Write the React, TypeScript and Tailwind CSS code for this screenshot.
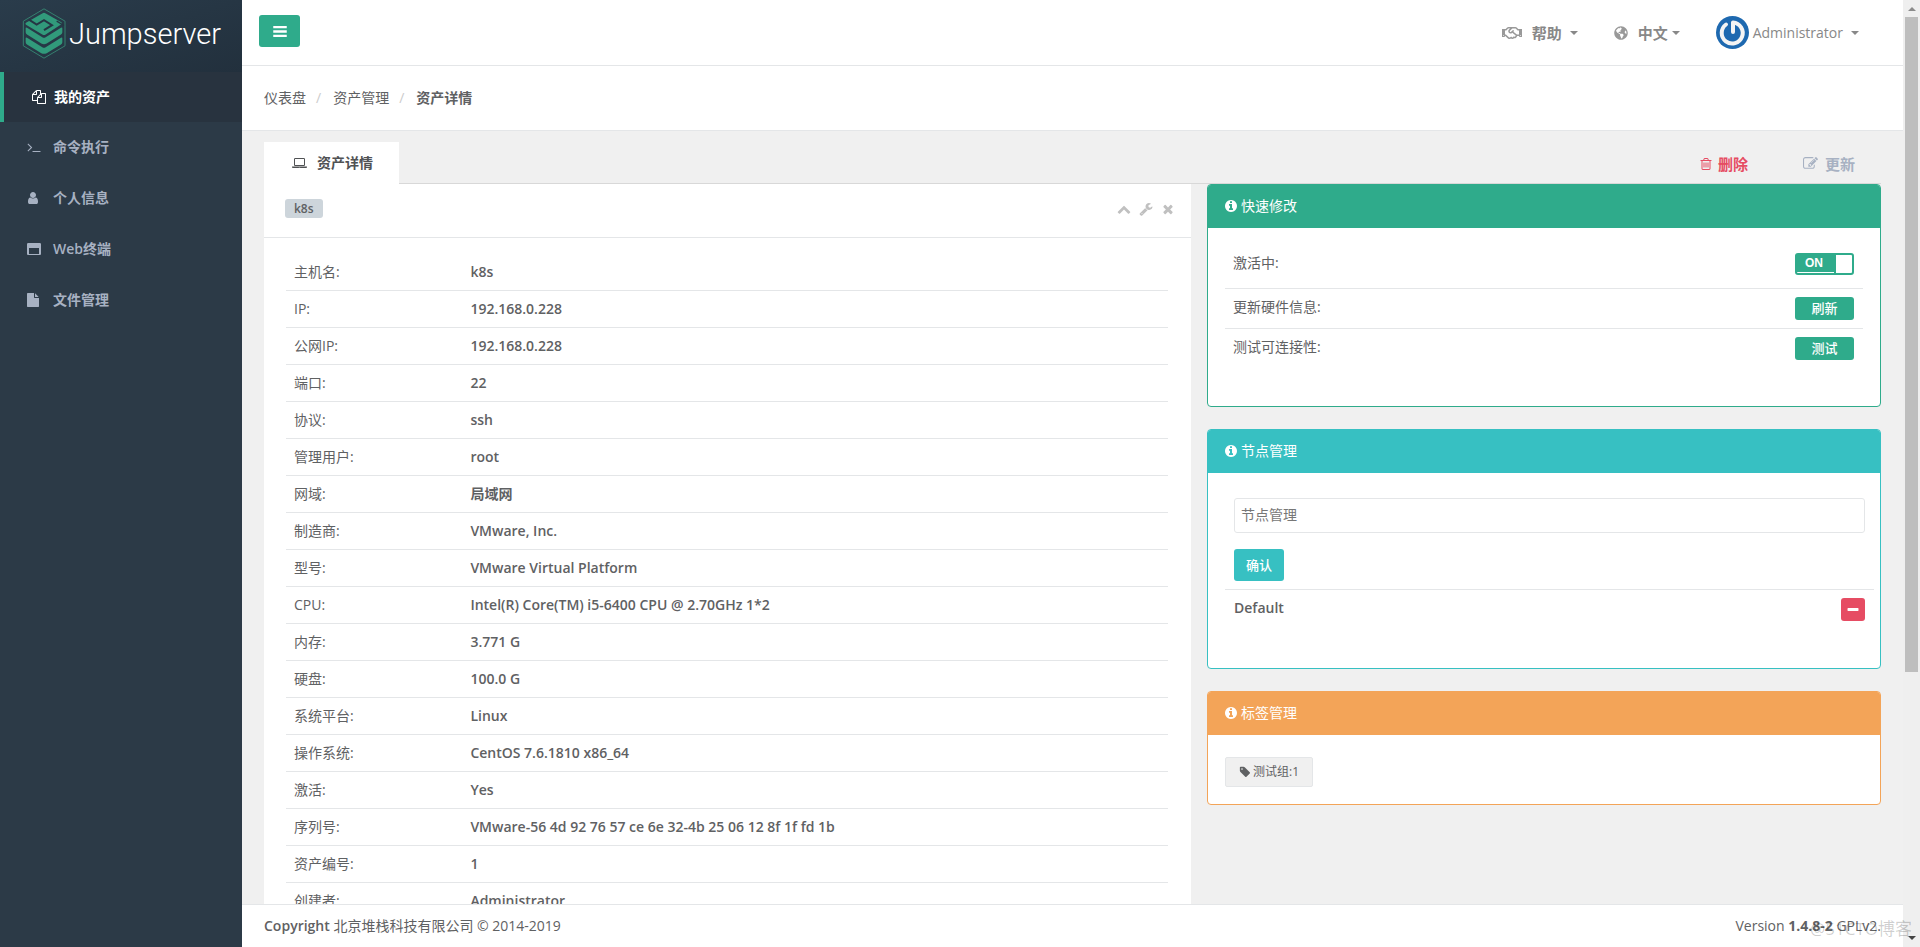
import { useState } from 'react';
import type { ReactNode } from 'react';
import { FaGlobeAmericas, FaRegHandshake } from 'react-icons/fa';

// Font Awesome 4 outlines, drawn on a 1792 grid
const paths = {
  files: 'M1696 384q40 0 68 28t28 68v1216q0 40-28 68t-68 28h-960q-40 0-68-28t-28-68v-288h-544q-40 0-68-28t-28-68v-672q0-40 20-88t48-76l408-408q28-28 76-48t88-20h416q40 0 68 28t28 68v328q68-40 128-40h416zm-544 213l-299 299h299v-299zm-640-384l-299 299h299v-299zm196 647l316-316v-416h-384v416q0 40-28 68t-68 28h-416v640h512v-256q0-40 20-88t48-76zm956 804v-1152h-384v416q0 40-28 68t-68 28h-416v640h896z',
  terminal: 'M649 983l-466 466q-10 10-23 10t-23-10l-50-50q-10-10-10-23t10-23l393-393-393-393q-10-10-10-23t10-23l50-50q10-10 23-10t23 10l466 466q10 10 10 23t-10 23zm1079 457v64q0 14-9 23t-23 9h-960q-14 0-23-9t-9-23v-64q0-14 9-23t23-9h960q14 0 23 9t9 23z',
  user: 'M1408 1399q0 109-62.5 187t-150.5 78h-854q-88 0-150.5-78t-62.5-187q0-85 8.5-160.5t31.5-152 58.5-131 94-89 134.5-34.5q131 128 313 128t313-128q76 0 134.5 34.5t94 89 58.5 131 31.5 152 8.5 160.5zm-256-887q0 159-112.5 271.5t-271.5 112.5-271.5-112.5-112.5-271.5 112.5-271.5 271.5-112.5 271.5 112.5 112.5 271.5z',
  window: 'M256 1536h1280v-768h-1280v768zm1536-1248v1216q0 66-47 113t-113 47h-1472q-66 0-113-47t-47-113v-1216q0-66 47-113t113-47h1472q66 0 113 47t47 113z',
  file: 'M1024 512v-472q22 14 36 28l408 408q14 14 28 36h-472zm-128 32q0 40 28 68t68 28h544v1056q0 40-28 68t-68 28h-1344q-40 0-68-28t-28-68v-1600q0-40 28-68t68-28h800v544z',
  laptop: 'M416 1280q-66 0-113-47t-47-113v-704q0-66 47-113t113-47h1088q66 0 113 47t47 113v704q0 66-47 113t-113 47h-1088zm-32-864v704q0 13 9.5 22.5t22.5 9.5h1088q13 0 22.5-9.5t9.5-22.5v-704q0-13-9.5-22.5t-22.5-9.5h-1088q-13 0-22.5 9.5t-9.5 22.5zm1376 928h160v96q0 40-47 68t-113 28h-1600q-66 0-113-28t-47-68v-96h1760zm-720 96q16 0 16-16t-16-16h-160q-16 0-16 16t16 16h160z',
  trash: 'M704 736v576q0 14-9 23t-23 9h-64q-14 0-23-9t-9-23v-576q0-14 9-23t23-9h64q14 0 23 9t9 23zm256 0v576q0 14-9 23t-23 9h-64q-14 0-23-9t-9-23v-576q0-14 9-23t23-9h64q14 0 23 9t9 23zm256 0v576q0 14-9 23t-23 9h-64q-14 0-23-9t-9-23v-576q0-14 9-23t23-9h64q14 0 23 9t9 23zm128 724v-948h-896v948q0 22 7 40.5t14.5 27 10.5 8.5h832q3 0 10.5-8.5t14.5-27 7-40.5zm-672-1076h448l-48-117q-7-9-17-11h-317q-10 2-17 11zm928 32v64q0 14-9 23t-23 9h-96v948q0 83-47 143.5t-113 60.5h-832q-66 0-113-58.5t-47-141.5v-952h-96q-14 0-23-9t-9-23v-64q0-14 9-23t23-9h309l70-167q15-37 54-63t79-26h320q40 0 79 26t54 63l70 167h309q14 0 23 9t9 23z',
  edit: 'M888 1184l116-116-152-152-116 116v56h96v96h56zm440-720q-16-16-33 1l-350 350q-17 17-1 33t33-1l350-350q17-17 1-33zm80 594v190q0 119-84.5 203.5t-203.5 84.5h-832q-119 0-203.5-84.5t-84.5-203.5v-832q0-119 84.5-203.5t203.5-84.5h832q63 0 117 25 15 7 18 23 3 17-9 29l-49 49q-14 14-32 8-23-6-45-6h-832q-66 0-113 47t-47 113v832q0 66 47 113t113 47h832q66 0 113-47t47-113v-126q0-13 9-22l64-64q15-15 35-7t20 29zm-96-738l288 288-672 672h-288v-288zm444 132l-92 92-288-288 92-92q28-28 68-28t68 28l152 152q28 28 28 68t-28 68z',
  info: 'M1152 1376v-160q0-14-9-23t-23-9h-96v-512q0-14-9-23t-23-9h-320q-14 0-23 9t-9 23v160q0 14 9 23t23 9h96v320h-96q-14 0-23 9t-9 23v160q0 14 9 23t23 9h448q14 0 23-9t9-23zm-128-896v-160q0-14-9-23t-23-9h-192q-14 0-23 9t-9 23v160q0 14 9 23t23 9h192q14 0 23-9t9-23zm640 416q0 209-103 385.5t-279.5 279.5-385.5 103-385.5-103-279.5-279.5-103-385.5 103-385.5 279.5-279.5 385.5-103 385.5 103 279.5 279.5 103 385.5z',
  chevronUp: 'M1683 1331l-166 165q-19 19-45 19t-45-19l-531-531-531 531q-19 19-45 19t-45-19l-166-165q-19-19-19-45.5t19-45.5l742-741q19-19 45-19t45 19l742 741q19 19 19 45.5t-19 45.5z',
  wrench: 'M448 1472q0-26-19-45t-45-19-45 19-19 45 19 45 45 19 45-19 19-45zm644-420l-682 682q-37 37-90 37-52 0-91-37l-106-108q-38-36-38-90 0-53 38-91l681-681q39 98 114.5 173.5t173.5 114.5zm634-435q0 39-23 106-47 134-164.5 217.5t-258.5 83.5q-185 0-316.5-131.5t-131.5-316.5 131.5-316.5 316.5-131.5q58 0 121.5 16.5t107.5 46.5q16 11 16 28t-16 28l-293 169v224l193 107q5-3 79-48.5t135.5-81 70.5-35.5q15 0 23.5 10t8.5 25z',
  times: 'M1490 1322q0 40-28 68l-136 136q-28 28-68 28t-68-28l-294-294-294 294q-28 28-68 28t-68-28l-136-136q-28-28-28-68t28-68l294-294-294-294q-28-28-28-68t28-68l136-136q28-28 68-28t68 28l294 294 294-294q28-28 68-28t68 28l136 136q28 28 28 68t-28 68l-294 294 294 294q28 28 28 68z',
  minus: 'M1600 736v192q0 40-28 68t-68 28h-1216q-40 0-68-28t-28-68v-192q0-40 28-68t68-28h1216q40 0 68 28t28 68z',
  tag: 'M576 448q0-53-37.5-90.5t-90.5-37.5-90.5 37.5-37.5 90.5 37.5 90.5 90.5 37.5 90.5-37.5 37.5-90.5zm1067 576q0 53-37 90l-491 492q-39 37-91 37-53 0-90-37l-715-716q-38-37-64.5-101t-26.5-117v-416q0-52 38-90t90-38h416q53 0 117 26.5t102 64.5l715 714q37 39 37 91z',
  bars: 'M32 256h1728v300h-1728zM32 810h1728v300h-1728zM32 1364h1728v300h-1728z',
};

type IconName = keyof typeof paths;

function Icon({ name, className = 'size-3.5' }: { name: IconName; className?: string }) {
  return (
    <svg viewBox={name === 'laptop' ? '0 0 1920 1792' : '0 0 1792 1792'} fill="currentColor" className={`shrink-0 ${className}`} aria-hidden="true">
      <path d={paths[name]} />
    </svg>
  );
}

const menu: { icon: IconName; label: string }[] = [
  { icon: 'files', label: '我的资产' },
  { icon: 'terminal', label: '命令执行' },
  { icon: 'user', label: '个人信息' },
  { icon: 'window', label: 'Web终端' },
  { icon: 'file', label: '文件管理' },
];

const details = [
  ['主机名:', 'k8s'],
  ['IP:', '192.168.0.228'],
  ['公网IP:', '192.168.0.228'],
  ['端口:', '22'],
  ['协议:', 'ssh'],
  ['管理用户:', 'root'],
  ['网域:', '局域网'],
  ['制造商:', 'VMware, Inc.'],
  ['型号:', 'VMware Virtual Platform'],
  ['CPU:', 'Intel(R) Core(TM) i5-6400 CPU @ 2.70GHz 1*2'],
  ['内存:', '3.771 G'],
  ['硬盘:', '100.0 G'],
  ['系统平台:', 'Linux'],
  ['操作系统:', 'CentOS 7.6.1810 x86_64'],
  ['激活:', 'Yes'],
  ['序列号:', 'VMware-56 4d 92 76 57 ce 6e 32-4b 25 06 12 8f 1f fd 1b'],
  ['资产编号:', '1'],
  ['创建者:', 'Administrator'],
];

function Caret({ className = '' }: { className?: string }) {
  return <span className={`size-0 border-x-4 border-t-4 border-x-transparent border-t-current ${className}`} />;
}

function Logo() {
  return (
    <svg viewBox="0 0 132 152" className="h-[51px] w-11 shrink-0" fill="none" aria-hidden="true">
      <path d="M66 2 129 39v74L66 150 4 113V39z" stroke="#35806f" strokeWidth="3" />
      <g fill="#319a7b">
        <path d="M62 15q4-2 8 0l48 27q4 3 0 6L71 79q-5 3-10 0L12 50q-4-3 0-6z" />
        <path d="M11 60q0-3 4-1l46 28q5 3 10 0l46-28q4-2 4 1v12q0 4-4 7l-43 27q-8 4-16 0L15 79q-4-3-4-7z" />
        <path d="M11 90q0-3 4-1l46 28q5 3 10 0l46-28q4-2 4 1v12q0 4-4 7l-43 26q-8 4-16 0l-43-26q-4-3-4-7z" />
      </g>
      <path d="M22 35 44 49 66 36 90 51 66 66" stroke="#253543" strokeWidth="6" />
      <path d="M126 52 104 39" stroke="#253543" strokeWidth="4" />
    </svg>
  );
}

function Avatar() {
  return (
    <svg viewBox="0 0 33 33" className="size-[33px]" fill="none" aria-hidden="true">
      <circle cx="16.5" cy="16.5" r="16.5" fill="#1e69b0" />
      <path d="M10 8.5A10.500 10.500 0 1 0 17 6.500V16" stroke="#f4f4f4" strokeWidth="4" strokeLinecap="round" strokeLinejoin="round" />
    </svg>
  );
}

function Sidebar() {
  return (
    <aside className="w-[242px] shrink-0 bg-[#2c3a47]">
      <div className="flex h-[72px] items-start bg-linear-to-br from-[#2a3c4b] to-[#22303d] pt-2 pl-[22px]">
        <Logo />
        <span className="ml-[3px] font-[Roboto] text-[29px] leading-[52px] font-light text-white">Jumpserver</span>
      </div>
      <nav className="flex flex-col gap-px">
        {menu.map((item, i) => (
          <a
            key={item.label}
            href="#"
            className={`flex h-[50px] items-center font-semibold ${
              i === 0 ? 'border-l-4 border-[#2fab8b] bg-[#28333f] pl-7 text-white' : 'pb-0.5 pl-[27px] text-[#a7b1c2]'
            }`}
          >
            <Icon name={item.icon} className={i === 0 ? 'mr-2 size-3.5' : 'mr-3 size-3.5'} />
            {item.label}
          </a>
        ))}
      </nav>
    </aside>
  );
}

function TopBar() {
  return (
    <header className="flex h-[66px] shrink-0 items-center border-b border-[#e4e6e8] bg-white pr-11 pl-[17px] text-[#888]">
      <button type="button" aria-label="菜单" className="-mt-1 flex h-8 w-[41px] items-center justify-center rounded-[3px] bg-[#2fab8b] text-white">
        <Icon name="bars" />
      </button>
      <div className="ml-auto flex items-center text-[15px]">
        <a href="#" className="flex items-center font-semibold">
          <FaRegHandshake className="mr-2.5 h-4 w-5 text-[#999]" />
          帮助
          <Caret className="ml-2" />
        </a>
        <a href="#" className="ml-9 flex items-center font-semibold">
          <FaGlobeAmericas className="mr-2.5 size-3.5 text-[#999]" />
          中文
          <Caret className="ml-1" />
        </a>
        <a href="#" className="ml-9 flex items-center text-sm">
          <Avatar />
          <span className="mr-2 ml-1">Administrator</span>
          <Caret />
        </a>
      </div>
    </header>
  );
}

function Breadcrumb() {
  return (
    <nav aria-label="breadcrumb" className="h-[65px] shrink-0 border-b border-[#e4e6e8] bg-white pt-[22px] pl-[22px]">
      <ol className="flex">
        <li><a href="#">仪表盘</a></li>
        <li className="pr-3 pl-2.5 text-[#ccc]">/</li>
        <li><a href="#">资产管理</a></li>
        <li className="pr-3 pl-2.5 text-[#ccc]">/</li>
        <li className="font-semibold">资产详情</li>
      </ol>
    </nav>
  );
}

function AssetPanel() {
  return (
    <section className="min-w-0 flex-1 bg-white">
      <div className="flex h-[54px] items-start justify-between border-b border-[#e4e6e8] pt-[15px] pr-4 pl-[21px]">
        <span className="rounded-[3px] bg-[#cdd5db] px-[9px] text-xs leading-[19px] font-semibold">k8s</span>
        <div className="flex gap-2 pt-[3px] text-[#c0c0c0]">
          <button type="button" aria-label="收起"><Icon name="chevronUp" /></button>
          <button type="button" aria-label="设置"><Icon name="wrench" /></button>
          <button type="button" aria-label="关闭"><Icon name="times" /></button>
        </div>
      </div>
      <div className="pt-4 pr-[23px] pl-[22px]">
        <table className="w-full table-fixed">
          <tbody>
            {details.map(([label, value]) => (
              <tr key={label} className="border-b border-[#e4e6e8]">
                <th scope="row" className="w-1/5 p-2 text-left font-normal">{label}</th>
                <td className="p-2 font-semibold">{value}</td>
              </tr>
            ))}
          </tbody>
        </table>
      </div>
    </section>
  );
}

function Panel({ title, frame, head, children }: { title: string; frame: string; head: string; children: ReactNode }) {
  return (
    <section className={`overflow-hidden rounded-[4px] border bg-white ${frame}`}>
      <h2 className={`flex h-[43px] items-center gap-[3px] pb-0.5 pl-4 text-white ${head}`}>
        <Icon name="info" />
        {title}
      </h2>
      {children}
    </section>
  );
}

function QuickEdit() {
  const [active, setActive] = useState(true);
  const button = 'h-[23px] w-[59px] rounded-[3px] bg-[#2fab8b] pb-0.5 text-[13px] leading-5 font-medium text-white';

  return (
    <Panel title="快速修改" frame="border-[#2fab8b]" head="bg-[#2fab8b]">
      <div className="px-[17px] pt-4 pb-[37px]">
        <div className="flex h-[45px] items-start justify-between border-b border-[#e4e6e8] pt-[9px] pr-[9px] pl-2">
          <label htmlFor="active">激活中:</label>
          <span className="relative flex h-[22px] w-[59px] rounded-[3px] border-2 border-[#2fab8b] bg-white">
            <input
              id="active"
              type="checkbox"
              checked={active}
              onChange={() => setActive(!active)}
              className="absolute inset-0 cursor-pointer opacity-0"
            />
            <span className="h-[17px] flex-1 bg-[#2fab8b] pl-2 font-['Liberation_Sans'] text-xs leading-4 font-bold text-white">ON</span>
            <span className="w-[18px] border-l-2 border-[#2fab8b]" />
          </span>
        </div>
        <div className="flex h-10 items-start justify-between border-b border-[#e4e6e8] pt-2 pr-[9px] pl-2">
          更新硬件信息:
          <button type="button" className={button}>刷新</button>
        </div>
        <div className="flex h-10 items-start justify-between pt-2 pr-[9px] pl-2">
          测试可连接性:
          <button type="button" className={button}>测试</button>
        </div>
      </div>
    </Panel>
  );
}

function Nodes() {
  return (
    <Panel title="节点管理" frame="border-[#37c0c2]" head="bg-[#37c0c2]">
      <div className="pt-[25px] pr-1.5 pb-[38px] pl-[17px]">
        <div className="border-b border-[#e4e6e8] px-[9px] pb-2">
          <input
            type="text"
            aria-label="节点管理"
            placeholder="节点管理"
            className="block h-[35px] w-full rounded-[3px] border border-[#e4e6e8] px-1.5 pb-0.5 placeholder:text-[#777]"
          />
          <button type="button" className="mt-4 h-8 w-[50px] rounded-[3px] bg-[#37c0c2] text-[13px] font-medium text-white">
            确认
          </button>
        </div>
        <div className="flex h-10 items-start justify-between px-[9px] pt-2 font-semibold">
          Default
          <button type="button" aria-label="删除节点" className="flex h-[23px] w-6 items-center justify-center rounded-[3px] bg-[#e64c63] text-white">
            <Icon name="minus" />
          </button>
        </div>
      </div>
    </Panel>
  );
}

function Labels() {
  return (
    <Panel title="标签管理" frame="border-[#f3a458]" head="bg-[#f3a458]">
      <div className="px-[17px] pt-[22px] pb-[17px]">
        <a href="#" className="inline-flex h-[30px] items-center gap-0.5 rounded-xs border border-[#e4e6e8] bg-[#f0f0f0] px-[13px] text-xs">
          <Icon name="tag" className="size-3" />
          测试组:1
        </a>
      </div>
    </Panel>
  );
}

function Scrollbar() {
  return (
    <div className="flex w-[17px] shrink-0 flex-col items-center bg-[#efefef]" aria-hidden="true">
      <span className="mt-[7px] mb-1.5 border-x-4 border-b-4 border-x-transparent border-b-[#8b8b8b]" />
      <div className="h-[655px] w-[13px] bg-[#bebebe]" />
      <span className="mt-auto mb-[7px] border-x-4 border-t-4 border-x-transparent border-t-[#444]" />
    </div>
  );
}

export default function App() {
  return (
    <div className="relative flex h-screen overflow-hidden bg-[#f0f0f0] font-['Open_Sans','Noto_Sans_CJK_SC',sans-serif] text-sm leading-5 text-[#5f6163]">
      <Sidebar />
      <div className="flex min-w-0 flex-1 flex-col">
        <TopBar />
        <Breadcrumb />
        <main className="min-h-0 flex-1 overflow-hidden px-[22px] pt-[11px]">
          <div className="flex h-[42px] border-b border-[#d8d8d8]">
            <a href="#" className="-mb-px flex w-[135px] items-center gap-2.5 bg-white pl-7 font-semibold text-[#505254]">
              <Icon name="laptop" className="h-3.5 w-[15px]" />
              资产详情
            </a>
            <div className="ml-auto flex items-center gap-[55px] pt-0.5 pr-[26px] text-[15px] font-semibold">
              <a href="#" className="flex items-center gap-[5px] text-[#e64c63]">
                <Icon name="trash" />
                删除
              </a>
              <a href="#" className="flex items-center gap-[7px] text-[#a7b1c2]">
                <Icon name="edit" className="size-[15px]" />
                更新
              </a>
            </div>
          </div>
          <div className="flex gap-4">
            <AssetPanel />
            <div className="flex w-[674px] shrink-0 flex-col gap-[22px]">
              <QuickEdit />
              <Nodes />
              <Labels />
            </div>
          </div>
        </main>
        <footer className="flex h-[43px] shrink-0 items-center justify-between border-t border-[#e4e6e8] bg-white px-[22px]">
          <p><strong className="font-semibold">Copyright</strong> 北京堆栈科技有限公司 © 2014-2019</p>
          <p>Version <strong className="font-bold">1.4.8-2</strong> GPLv2.</p>
        </footer>
      </div>
      <Scrollbar />
      <span className="absolute right-2 bottom-2 text-[17px] text-black/20">@51CTO博客</span>
    </div>
  );
}
